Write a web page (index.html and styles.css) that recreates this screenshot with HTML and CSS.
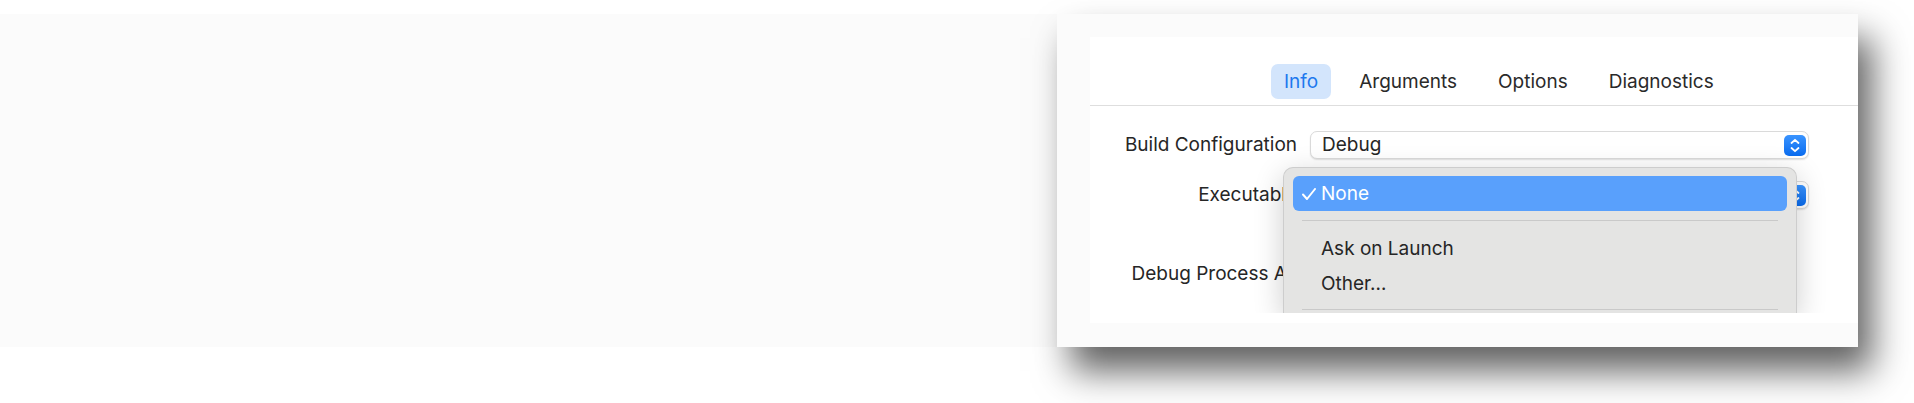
FILE: index.html
```html
<!DOCTYPE html>
<html lang="en">
<head>
<meta charset="utf-8">
<title>Scheme Editor – Run Info</title>
<link rel="stylesheet" href="styles.css">
</head>
<body>
<div class="page">
  <div class="backdrop"></div>
  <div class="card">
    <div class="panel">
      <div class="tabbar">
        <div class="tab active">Info</div>
        <div class="tab">Arguments</div>
        <div class="tab">Options</div>
        <div class="tab">Diagnostics</div>
      </div>
      <div class="form">
        <div class="label">Build Configuration</div>
        <div class="popup">
          <span class="popup-value">Debug</span>
          <svg class="stepper" width="22" height="21" viewBox="0 0 22 21">
            <defs>
              <linearGradient id="stepgrad" x1="0" y1="0" x2="0" y2="1">
                <stop offset="0" stop-color="#3a94ff"/>
                <stop offset="1" stop-color="#0a6cef"/>
              </linearGradient>
            </defs>
            <rect x="0" y="0" width="22" height="21" rx="5" fill="url(#stepgrad)"/>
            <polyline points="7.5,8 11,4.8 14.5,8" fill="none" stroke="#fff" stroke-width="1.8" stroke-linecap="round" stroke-linejoin="round"/>
            <polyline points="7.5,13 11,16.2 14.5,13" fill="none" stroke="#fff" stroke-width="1.8" stroke-linecap="round" stroke-linejoin="round"/>
          </svg>
        </div>
        <div class="label">Executable</div>
        <div class="popup">
          <span class="popup-value">None</span>
          <svg class="stepper" width="22" height="21" viewBox="0 0 22 21">
            <rect x="0" y="0" width="22" height="21" rx="5" fill="url(#stepgrad)"/>
            <polyline points="7.5,8 11,4.8 14.5,8" fill="none" stroke="#fff" stroke-width="1.8" stroke-linecap="round" stroke-linejoin="round"/>
            <polyline points="7.5,13 11,16.2 14.5,13" fill="none" stroke="#fff" stroke-width="1.8" stroke-linecap="round" stroke-linejoin="round"/>
          </svg>
        </div>
        <div class="label row-spaced">Debug Process As</div>
        <div class="control row-spaced"></div>
      </div>
      <div class="menu">
        <div class="menu-item selected">
          <svg class="check" width="14" height="12" viewBox="0 0 14 12">
            <polyline points="1,6.5 5,11 13,1" fill="none" stroke="#fff" stroke-width="2" stroke-linecap="round" stroke-linejoin="round"/>
          </svg>
          <span>None</span>
        </div>
        <div class="menu-sep first-sep"></div>
        <div class="menu-item">Ask on Launch</div>
        <div class="menu-item">Other…</div>
        <div class="menu-sep last-sep"></div>
      </div>
    </div>
  </div>
</div>
</body>
</html>
```

FILE: styles.css
```css
html, body {
  margin: 0;
  padding: 0;
  background: #ffffff;
}

body {
  font-family: Inter, "Helvetica Neue", Arial, sans-serif;
  color: #262626;
  width: 1914px;
  height: 403px;
  overflow: hidden;
}

.page {
  display: flex;
  align-items: flex-start;
  padding-top: 14px;
  padding-right: 56px;
}

.backdrop {
  flex: 1;
  height: 333px;
  background: #fbfbfb;
}

.card {
  width: 801px;
  height: 333px;
  box-sizing: border-box;
  padding: 23px 0 24px 33px;
  background: #fbfbfb;
  box-shadow: 14px 24px 34px rgba(0, 0, 0, 0.62);
}

.panel {
  position: relative;
  height: 286px;
  background: #ffffff;
}

.tabbar {
  display: flex;
  gap: 15px;
  height: 41px;
  padding: 27px 0 0 181px;
  border-bottom: 1px solid #dedede;
}

.tab {
  height: 35px;
  line-height: 35px;
  padding: 0 13px;
  border-radius: 7px;
  font-size: 19px;
  color: #2a2a2a;
}

.tab.active {
  background: #d3e5fc;
  color: #1e78ee;
}

.form {
  display: grid;
  grid-template-columns: 207px 499px;
  grid-auto-rows: 28px;
  column-gap: 13px;
  row-gap: 22px;
  margin-top: 25px;
  font-size: 19px;
}

.label {
  text-align: right;
  line-height: 28px;
  white-space: nowrap;
}

.row-spaced {
  margin-top: 29px;
}

.popup {
  display: flex;
  align-items: center;
  justify-content: space-between;
  box-sizing: border-box;
  height: 28px;
  padding: 0 2px 0 11px;
  background: #ffffff;
  border: 1px solid #dadada;
  border-radius: 7px;
  box-shadow: 0 1px 1.5px rgba(0, 0, 0, 0.12);
}

.popup-value {
  line-height: 26px;
}

.stepper {
  display: block;
}

.menu {
  position: absolute;
  left: 193px;
  top: 130px;
  width: 514px;
  height: 146px;
  box-sizing: border-box;
  padding: 8px 9px 0;
  background: #e4e4e3;
  border: 1px solid #cdcdcd;
  border-bottom: none;
  border-radius: 10px 10px 0 0;
  box-shadow: 0 8px 30px rgba(0, 0, 0, 0.2);
  clip-path: inset(-50px -50px 0 -50px);
  font-size: 19px;
  color: #262626;
}

.menu-item {
  display: flex;
  align-items: center;
  height: 35px;
  padding-left: 28px;
  border-radius: 6px;
}

.menu-item.selected {
  padding-left: 9px;
  background: #59a0fc;
  color: #ffffff;
}

.check {
  display: block;
  margin-right: 5px;
}

.menu-sep {
  height: 1px;
  margin: 0 9px;
  background: #c9c9c9;
}

.first-sep {
  margin-top: 9px;
  margin-bottom: 10px;
}

.last-sep {
  margin-top: 8px;
}
```
